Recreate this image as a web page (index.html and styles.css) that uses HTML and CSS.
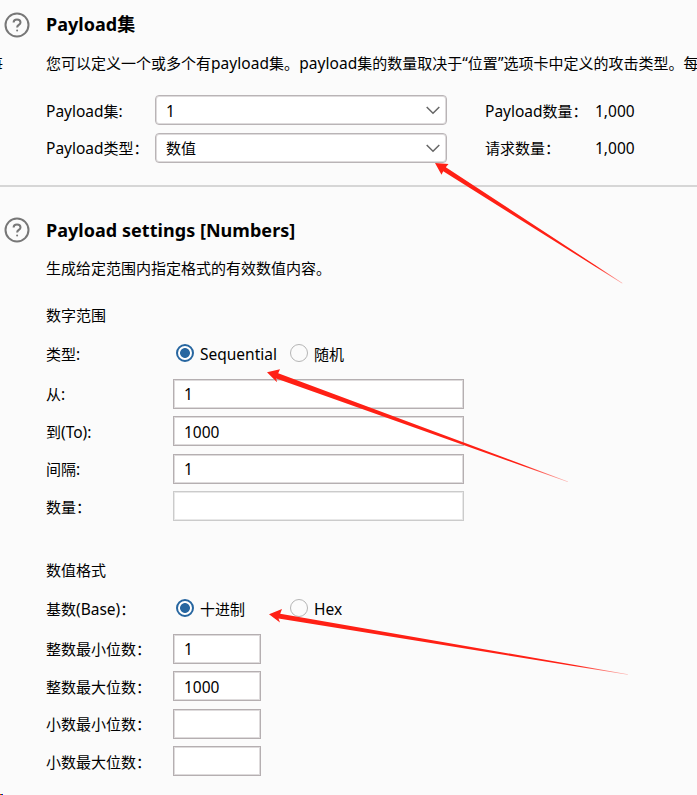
FILE: index.html
```html
<!DOCTYPE html>
<html lang="zh-CN">
<head>
<meta charset="utf-8">
<title>Payload</title>
<link rel="stylesheet" href="styles.css">
</head>
<body>
<main class="page">
  <section class="panel sets">
    <header class="head">
      <svg class="help" viewBox="0 0 26 26"><circle cx="13" cy="13" r="11.5"/><path d="M9.6 10.4C9.6 8.5 11 7.4 13 7.4s3.5 1.200 3.500 3c0 2.400-3.400 2.600-3.400 5"/><circle class="dot" cx="13.100" cy="18.600" r="1"/></svg>
      <h2>Payload集</h2>
    </header>
    <div class="descrow"><span class="edge">每</span><p>您可以定义一个或多个有<b>payload</b>集。<b>payload</b>集的数量取决于<b>“</b>位置<b>”</b>选项卡中定义的攻击类型。每</p></div>
    <div class="setrow first"><label><b>Payload</b>集<b>:</b></label><div class="select"><b>1</b><svg viewBox="0 0 14 9"><path d="M.7 1 7 7.300 13.300 1"/></svg></div><span class="count"><b>Payload</b>数量：</span><b>1,000</b></div>
    <div class="setrow"><label><b>Payload</b>类型：</label><div class="select">数值<svg viewBox="0 0 14 9"><path d="M.7 1 7 7.300 13.300 1"/></svg></div><span class="count">请求数量：</span><b>1,000</b></div>
  </section>
  <section class="panel settings">
    <header class="head">
      <svg class="help" viewBox="0 0 26 26"><circle cx="13" cy="13" r="11.5"/><path d="M9.6 10.4C9.6 8.5 11 7.4 13 7.4s3.5 1.200 3.500 3c0 2.400-3.400 2.600-3.400 5"/><circle class="dot" cx="13.100" cy="18.600" r="1"/></svg>
      <h2>Payload settings [Numbers]</h2>
    </header>
    <p class="intro">生成给定范围内指定格式的有效数值内容。</p>
    <h3>数字范围</h3>
    <div class="row radios"><label>类型<b>:</b></label><span class="radio on"></span><span class="opt"><b>Sequential</b></span><span class="radio"></span><span>随机</span></div>
    <div class="fields">
      <div class="row"><label>从<b>:</b></label><div class="field"><b>1</b></div></div>
      <div class="row"><label>到<b>(To):</b></label><div class="field"><b>1000</b></div></div>
      <div class="row"><label>间隔<b>:</b></label><div class="field"><b>1</b></div></div>
      <div class="row"><label>数量：</label><div class="field disabled"></div></div>
    </div>
    <h3 class="format">数值格式</h3>
    <div class="row radios"><label>基数<b>(Base)</b>：</label><span class="radio on"></span><span class="opt">十进制</span><span class="radio"></span><span><b>Hex</b></span></div>
    <div class="fields short">
      <div class="row"><label>整数最小位数：</label><div class="field"><b>1</b></div></div>
      <div class="row"><label>整数最大位数：</label><div class="field"><b>1000</b></div></div>
      <div class="row"><label>小数最小位数：</label><div class="field"></div></div>
      <div class="row"><label>小数最大位数：</label><div class="field"></div></div>
    </div>
  </section>
  <svg class="arrows" viewBox="0 0 697 795">
    <defs>
      <linearGradient id="a1" gradientUnits="userSpaceOnUse" x1="435" y1="163" x2="624" y2="284"><stop offset=".85" stop-color="#ff2015"/><stop offset="1" stop-color="#ff2015" stop-opacity=".3"/></linearGradient>
      <linearGradient id="a2" gradientUnits="userSpaceOnUse" x1="267" y1="373" x2="568" y2="482"><stop offset=".85" stop-color="#ff2015"/><stop offset="1" stop-color="#ff2015" stop-opacity=".3"/></linearGradient>
      <linearGradient id="a3" gradientUnits="userSpaceOnUse" x1="269" y1="614" x2="629" y2="675"><stop offset=".85" stop-color="#ff2015"/><stop offset="1" stop-color="#ff2015" stop-opacity=".3"/></linearGradient>
    </defs>
    <path fill="url(#a1)" d="M435 163l13.500 1-2.700 3.300L622.500 283l-.4.500L443.200 171.200l-1.700 3.600z"/>
    <path fill="url(#a2)" d="M267 372.300l13-3-1.800 4L568 481.400l-.3.600L276.200 378.600l.8 3.600z"/>
    <path fill="url(#a3)" d="M269 614.300l13-5.300-1.800 4.700L628 674.200l-.2.600L278.500 618.500l1.500 4z"/>
  </svg>
  <span class="corner"></span>
</main>
</body>
</html>
```
FILE: styles.css
```css
* { box-sizing: border-box; }
body { margin: 0; background: #fbfbfb; color: #000; }
.page {
  position: relative; width: 697px; height: 795px; overflow: hidden;
  font: 15px/20px "Noto Sans CJK SC", sans-serif; white-space: nowrap;
}
b { font: 15.5px/20px "Noto Sans", sans-serif; }
p, h2, h3 { margin: 0; }
h2 { font: bold 18px/26px "Noto Sans", "Noto Sans CJK SC", sans-serif; letter-spacing: .04px; color: #000; }
h3 { font-weight: normal; font-size: 15px; line-height: 20px; }
.sets { height: 187px; border-bottom: 2px solid #d6d6d6; }
.head { display: flex; align-items: center; height: 50px; padding-left: 4px; }
.sets h2 { padding-bottom: 2px; }
.help { width: 26px; height: 26px; margin-right: 16px; fill: none; stroke: #777; stroke-width: 2; }
.help .dot { fill: #777; stroke: none; }
.descrow { display: flex; height: 45px; padding-top: 3px; }
.descrow p { flex: none; }
.descrow b { letter-spacing: .05px; }
.edge { display: flex; flex: none; justify-content: flex-end; width: 3px; margin-right: 43px; overflow: hidden; height: 20px; }
.setrow { display: flex; align-items: center; height: 30px; margin: 0 0 8px 46px; }
.setrow label { width: 109px; }
.first label, .first .count, .first > b, .first .select b { padding-top: 2px; }
.select {
  display: flex; align-items: center; justify-content: space-between; width: 292px; height: 30px;
  margin-right: 38px; padding: 0 6px 0 10px; background: #fff;
  border: 1px solid #b9b4b6; border-radius: 4px; box-shadow: inset 0 0 0 1px #dedbdc;
}
.select svg { width: 14px; height: 9px; margin-top: 1px; fill: none; stroke: #666; stroke-width: 1.500; }
.count { width: 110px; }
.settings { padding-top: 18px; }
.intro { margin: 3px 0 27px 46px; }
.settings h3 { margin-left: 46px; }
.settings .format { margin-top: 39px; }
.row { display: flex; align-items: center; height: 30px; margin-left: 46px; }
.row label { width: 127px; }
.radios { height: 54px; padding-top: 2px; }
.radios label { width: 130px; }
.radios label, .radios .opt, .radios span:last-child { padding-top: 2px; }
.radio { width: 18px; height: 18px; border: 1.500px solid #b5b5b5; border-radius: 50%; margin-right: 6px; }
.radio.on { border: 2px solid #2766a0; background: radial-gradient(circle, #2766a0 4.500px, #fff 5.300px); }
.opt { width: 90px; }
.fields { display: grid; grid-template-rows: 30px 30px 30px 30px; row-gap: 7.400px; }
.field { display: flex; align-items: center; width: 291px; height: 30px; padding-left: 10px; background: #fff; border: 1px solid #b5afb1; box-shadow: inset 0 0 0 1px #dedbdc; }
.fields .row:nth-child(even) label, .fields .row:nth-child(even) b { padding-top: 2px; }
.fields .row label b { padding-top: 0 !important; }
.short { grid-template-rows: 29.600px 30px 30px 30px; }
.disabled { border-color: #cbcbcb; box-shadow: inset 0 0 0 1px #e8e8e8; }
.short .field { width: 88px; }
.arrows { position: absolute; left: 0; top: 0; width: 697px; height: 795px; pointer-events: none; }
.corner { position: absolute; left: 0; bottom: 0; width: 3px; height: 1px; background: linear-gradient(90deg, #f00 1px, #080 1px 2px, #00f 2px); }
```
